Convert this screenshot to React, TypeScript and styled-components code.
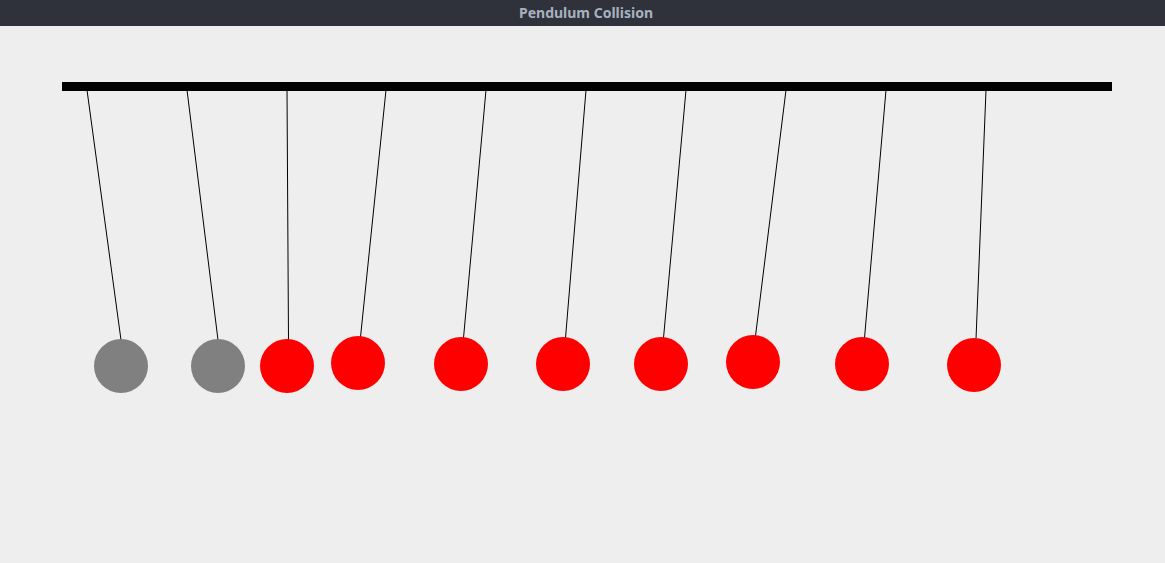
import React from "react";
import styled, { createGlobalStyle } from "styled-components";

const Global = createGlobalStyle`
  html, body { margin: 0; padding: 0; background: #eeeeee; }
  body { font-family: "Noto Sans", "DejaVu Sans", sans-serif; }
`;

const Window = styled.div`
  display: flex;
  flex-direction: column;
  width: 1165px;
  height: 563px;
  background: #eeeeee;
  overflow: hidden;
`;

const TitleBar = styled.div`
  flex: 0 0 26px;
  display: flex;
  align-items: center;
  justify-content: center;
  background: #2f323b;
  color: #a7b1bf;
  font-family: "Noto Sans", "DejaVu Sans", sans-serif;
  font-weight: 700;
  font-size: 14px;
  padding-left: 7px;
  padding-bottom: 1px;
  box-sizing: border-box;
`;

const Canvas = styled.svg`
  flex: 1 1 auto;
  display: block;
  width: 1165px;
  height: 537px;
`;

type Bob = { anchor: number; end: number; cx: number; cy: number; color: string };

const R = 27;

const bobs: Bob[] = [
  { anchor: 87, end: 121, cx: 121, cy: 366, color: "#808080" },
  { anchor: 187, end: 218, cx: 218, cy: 366, color: "#808080" },
  { anchor: 287, end: 288.5, cx: 287, cy: 366, color: "#ff0000" },
  { anchor: 386, end: 360.5, cx: 358, cy: 363, color: "#ff0000" },
  { anchor: 486, end: 463.5, cx: 461, cy: 364, color: "#ff0000" },
  { anchor: 586, end: 565.5, cx: 563, cy: 364, color: "#ff0000" },
  { anchor: 686, end: 663.5, cx: 661, cy: 364, color: "#ff0000" },
  { anchor: 786, end: 755.5, cx: 753, cy: 362, color: "#ff0000" },
  { anchor: 886, end: 864.5, cx: 862, cy: 364, color: "#ff0000" },
  { anchor: 986, end: 976, cx: 974, cy: 365, color: "#ff0000" },
];

export default function App() {
  return (
    <>
      <Global />
      <Window>
        <TitleBar>Pendulum Collision</TitleBar>
        <Canvas viewBox="0 26 1165 537">
          <rect x={62} y={82} width={1050} height={9} fill="#000" />
          {bobs.map((b, i) => (
            <line
              key={"l" + i}
              x1={b.anchor}
              y1={90}
              x2={b.end}
              y2={b.cy - R + 1}
              stroke="#000"
              strokeWidth={1}
            />
          ))}
          {bobs.map((b, i) => (
            <circle key={"c" + i} cx={b.cx} cy={b.cy} r={R} fill={b.color} />
          ))}
        </Canvas>
      </Window>
    </>
  );
}
